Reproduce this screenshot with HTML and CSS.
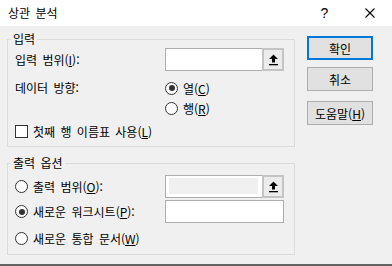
FILE: index.html
```html
<!DOCTYPE html>
<html lang="ko">

<head>
    <meta charset="UTF-8">
    <title>상관 분석</title>
    <link rel="stylesheet" href="styles.css">
</head>

<body>
    <div class="dialog">
        <div class="titlebar">
            <span class="title">상관 분석</span>
            <div class="controls">
                <span class="ctl help">?</span>
                <span class="ctl close">
                    <svg width="10" height="10" viewBox="0 0 10 10">
                        <path d="M0.5 0.5 L9.5 9.5 M9.5 0.5 L0.5 9.5" stroke="#000" stroke-width="1.1" fill="none"/>
                    </svg>
                </span>
            </div>
        </div>

        <div class="main">
            <div class="groups">
                <fieldset class="group">
                    <legend>입력</legend>
                    <div class="group-body input-body">
                        <div class="row">
                            <span class="label">입력 범위(<u>I</u>):</span>
                            <div class="ref-edit">
                                <span class="field"></span>
                                <span class="pick">
                                    <span class="pick-inner">
                                        <svg width="11" height="12" viewBox="0 0 11 12">
                                            <path d="M5.5 0.5 L10 5 L7 5 L7 8.5 L4 8.5 L4 5 L1 5 Z" fill="#000"/>
                                            <rect x="1" y="10" width="9" height="1.3" fill="#000"/>
                                        </svg>
                                    </span>
                                </span>
                            </div>
                        </div>
                        <div class="row dir-row">
                            <span class="label">데이터 방향:</span>
                            <div class="radios">
                                <label class="option"><span class="radio checked"></span><span>열(<u>C</u>)</span></label>
                                <label class="option"><span class="radio"></span><span>행(<u>R</u>)</span></label>
                            </div>
                        </div>
                        <label class="option check-row"><span class="checkbox"></span><span>첫째 행 이름표 사용(<u>L</u>)</span></label>
                    </div>
                </fieldset>

                <fieldset class="group output">
                    <legend>출력 옵션</legend>
                    <div class="group-body output-body">
                        <div class="row">
                            <label class="option label"><span class="radio"></span><span>출력 범위(<u>O</u>):</span></label>
                            <div class="ref-edit">
                                <span class="field disabled"><span class="field-fill"></span></span>
                                <span class="pick">
                                    <span class="pick-inner">
                                        <svg width="11" height="12" viewBox="0 0 11 12">
                                            <path d="M5.5 0.5 L10 5 L7 5 L7 8.5 L4 8.5 L4 5 L1 5 Z" fill="#000"/>
                                            <rect x="1" y="10" width="9" height="1.3" fill="#000"/>
                                        </svg>
                                    </span>
                                </span>
                            </div>
                        </div>
                        <div class="row sheet-row">
                            <label class="option label"><span class="radio checked"></span><span>새로운 워크시트(<u>P</u>):</span></label>
                            <div class="text-edit"></div>
                        </div>
                        <label class="option book-row"><span class="radio"></span><span>새로운 통합 문서(<u>W</u>)</span></label>
                    </div>
                </fieldset>
            </div>

            <div class="buttons">
                <button class="btn default">확인</button>
                <button class="btn">취소</button>
                <button class="btn help-btn">도움말(<u>H</u>)</button>
            </div>
        </div>
    </div>
</body>

</html>
```

FILE: styles.css
```css
* {
    margin: 0;
    padding: 0;
    box-sizing: border-box;
}

html,
body {
    width: 392px;
    height: 266px;
    overflow: hidden;
}

body {
    font-family: "Noto Sans CJK KR", "Liberation Sans", sans-serif;
    font-size: 12px;
    color: #000;
    word-spacing: 2px;
    background-color: #f0f0f0;
}

u {
    text-decoration: underline;
    text-underline-offset: 1px;
}

.dialog {
    display: flex;
    flex-direction: column;
    height: 266px;
    border-bottom: 2px solid #646464;
}

/* title bar */
.titlebar {
    display: flex;
    justify-content: space-between;
    align-items: center;
    height: 26px;
    padding-left: 8px;
    background-color: #fff;
}

.title {
    line-height: 14px;
    padding-bottom: 1px;
}

.controls {
    display: flex;
    height: 100%;
}

.ctl {
    display: flex;
    justify-content: center;
    align-items: center;
    width: 45px;
}

.help {
    font-family: "Liberation Sans", sans-serif;
    font-size: 14px;
    padding-bottom: 1px;
}

/* body */
.main {
    display: flex;
    flex: 1;
    padding: 6px 0 0 7px;
}

.groups {
    width: 288px;
}

.group {
    border: 1px solid #dcdcdc;
    padding: 0;
    margin: 0;
    min-width: 0;
}

.group legend {
    margin-left: 3px;
    padding: 0 2px;
    line-height: 14px;
}

.group.output {
    margin-top: 9px;
}

.group-body {
    padding: 0 10px 0 7px;
}

.input-body {
    padding-top: 2px;
    padding-bottom: 5px;
}

.output-body {
    padding-top: 5px;
    padding-bottom: 6px;
}

.row {
    display: flex;
    align-items: center;
    height: 23px;
}

.label {
    width: 150px;
    flex-shrink: 0;
}

.dir-row {
    align-items: flex-start;
    height: auto;
    margin-top: 7px;
}

.dir-row .label {
    line-height: 20px;
}

.option {
    display: flex;
    align-items: center;
    gap: 5px;
    height: 20px;
    white-space: nowrap;
}

.check-row {
    margin-top: 3px;
}

.sheet-row {
    margin-top: 2px;
}

.book-row {
    margin-top: 5px;
}

/* radio / checkbox */
.radio {
    display: flex;
    justify-content: center;
    align-items: center;
    width: 13px;
    height: 13px;
    border: 1px solid #333;
    border-radius: 50%;
    background-color: #fff;
    flex-shrink: 0;
}

.radio.checked::after {
    content: "";
    width: 6px;
    height: 6px;
    border-radius: 50%;
    background-color: #333;
}

.checkbox {
    width: 13px;
    height: 13px;
    border: 1px solid #333;
    background-color: #fff;
    flex-shrink: 0;
}

/* ref edit boxes */
.ref-edit {
    display: flex;
    width: 119px;
    height: 23px;
    border: 1px solid #adadad;
    border-right: none;
    background-color: #fff;
}

.field {
    flex: 1;
}

.field.disabled {
    display: flex;
    padding: 2px 4px 3px 3px;
}

.field-fill {
    flex: 1;
    background-color: #f0f0f0;
}

.pick {
    display: flex;
    width: 22px;
    margin: -1px 0;
    padding: 2px;
    background-color: #c4c4c4;
}

.pick-inner {
    display: flex;
    justify-content: center;
    align-items: center;
    flex: 1;
    background-color: #ececec;
}

.text-edit {
    width: 119px;
    height: 23px;
    border: 1px solid #adadad;
    background-color: #fff;
}

/* buttons */
.buttons {
    display: flex;
    flex-direction: column;
    margin-left: 12px;
    padding-top: 4px;
}

.btn {
    width: 66px;
    height: 24px;
    border: 1px solid #adadad;
    background-color: #e1e1e1;
    font-family: inherit;
    font-size: 12px;
    color: #000;
}

.btn + .btn {
    margin-top: 7px;
}

.btn.default {
    border: 2px solid #0078d7;
}

.btn.help-btn {
    margin-top: 10px;
}
```
